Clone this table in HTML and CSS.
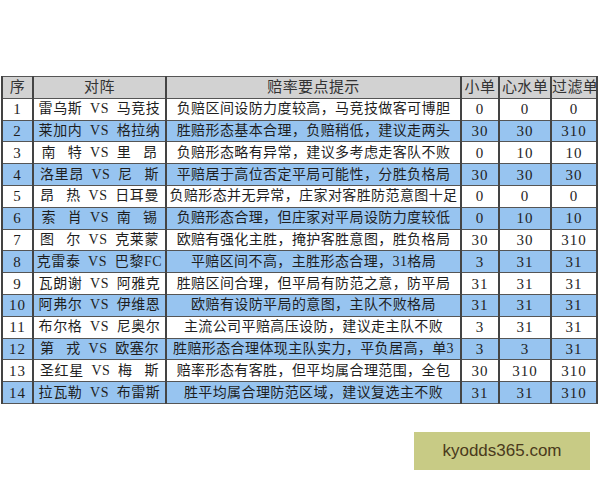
FILE: index.html
```html
<!DOCTYPE html>
<html lang="zh-CN">
<head>
<meta charset="utf-8">
<title>赔率要点提示</title>
<link rel="stylesheet" href="styles.css">
</head>
<body>
<div class="page">
  <table class="odds">
    <colgroup>
      <col class="c-no"><col class="c-match"><col class="c-tip"><col class="c-a"><col class="c-b"><col class="c-c">
    </colgroup>
    <thead>
      <tr><th>序</th><th>对阵</th><th>赔率要点提示</th><th>小单</th><th>心水单</th><th>过滤单</th></tr>
    </thead>
    <tbody>
      <tr><td class="num">1</td><td class="match">雷乌斯&ensp;VS&ensp;马竞技</td><td>负赔区间设防力度较高，马竞技做客可博胆</td><td class="num">0</td><td class="num">0</td><td class="num">0</td></tr>
      <tr class="blue"><td class="num">2</td><td class="match">莱加内&ensp;VS&ensp;格拉纳</td><td>胜赔形态基本合理，负赔稍低，建议走两头</td><td class="num">30</td><td class="num">30</td><td class="num">310</td></tr>
      <tr><td class="num">3</td><td class="match">南&ensp; 特&ensp;VS&ensp;里&ensp; 昂</td><td>负赔形态略有异常，建议多考虑走客队不败</td><td class="num">0</td><td class="num">10</td><td class="num">10</td></tr>
      <tr class="blue"><td class="num">4</td><td class="match">洛里昂&ensp;VS&ensp;尼&ensp; 斯</td><td>平赔居于高位否定平局可能性，分胜负格局</td><td class="num">30</td><td class="num">30</td><td class="num">30</td></tr>
      <tr><td class="num">5</td><td class="match">昂&ensp; 热&ensp;VS&ensp;日耳曼</td><td>负赔形态并无异常，庄家对客胜防范意图十足</td><td class="num">0</td><td class="num">0</td><td class="num">0</td></tr>
      <tr class="blue"><td class="num">6</td><td class="match">索&ensp; 肖&ensp;VS&ensp;南&ensp; 锡</td><td>负赔形态合理，但庄家对平局设防力度较低</td><td class="num">0</td><td class="num">10</td><td class="num">10</td></tr>
      <tr><td class="num">7</td><td class="match">图&ensp; 尔&ensp;VS&ensp;克莱蒙</td><td>欧赔有强化主胜，掩护客胜意图，胜负格局</td><td class="num">30</td><td class="num">30</td><td class="num">310</td></tr>
      <tr class="blue"><td class="num">8</td><td class="match">克雷泰&ensp;VS&ensp;巴黎FC</td><td>平赔区间不高，主胜形态合理，31格局</td><td class="num">3</td><td class="num">31</td><td class="num">31</td></tr>
      <tr><td class="num">9</td><td class="match">瓦朗谢&ensp;VS&ensp;阿雅克</td><td>胜赔区间合理，但平局有防范之意，防平局</td><td class="num">31</td><td class="num">31</td><td class="num">31</td></tr>
      <tr class="blue"><td class="num">10</td><td class="match">阿弗尔&ensp;VS&ensp;伊维恩</td><td>欧赔有设防平局的意图，主队不败格局</td><td class="num">31</td><td class="num">31</td><td class="num">31</td></tr>
      <tr><td class="num">11</td><td class="match">布尔格&ensp;VS&ensp;尼奥尔</td><td>主流公司平赔高压设防，建议走主队不败</td><td class="num">3</td><td class="num">31</td><td class="num">31</td></tr>
      <tr class="blue"><td class="num">12</td><td class="match">第&ensp; 戎&ensp;VS&ensp;欧塞尔</td><td>胜赔形态合理体现主队实力，平负居高，单3</td><td class="num">3</td><td class="num">3</td><td class="num">31</td></tr>
      <tr><td class="num">13</td><td class="match">圣红星&ensp;VS&ensp;梅&ensp; 斯</td><td>赔率形态有客胜，但平均属合理范围，全包</td><td class="num">30</td><td class="num">310</td><td class="num">310</td></tr>
      <tr class="blue"><td class="num">14</td><td class="match">拉瓦勒&ensp;VS&ensp;布雷斯</td><td>胜平均属合理防范区域，建议复选主不败</td><td class="num">31</td><td class="num">31</td><td class="num">310</td></tr>
    </tbody>
  </table>
  <div class="mark-row">
    <div class="mark">kyodds365.com</div>
  </div>
</div>
</body>
</html>
```
FILE: styles.css
```css
html, body {
  margin: 0;
  padding: 0;
  background: #ffffff;
}
.page {
  width: 600px;
  height: 480px;
  padding-top: 76px;
  box-sizing: border-box;
  overflow: hidden;
}
.odds {
  margin-left: 1px;
  width: 595px;
  table-layout: fixed;
  border-collapse: collapse;
  font-family: "Liberation Serif", "Noto Sans CJK SC", serif;
  font-size: 14px;
  color: #1e1e1e;
}
.c-no { width: 31px; }
.c-match { width: 133px; }
.c-tip { width: 295px; }
.c-a { width: 38px; }
.c-b { width: 52px; }
.c-c { width: 46px; }
.odds th, .odds td {
  height: 20.8px;
  padding: 0;
  text-align: center;
  white-space: nowrap;
  overflow: hidden;
  border-top: 1px solid #555555;
  border-bottom: 1px solid #555555;
  border-left: 2px solid #444444;
  border-right: 2px solid #444444;
  line-height: 20px;
  letter-spacing: 0.4px;
}
.odds th {
  background: #d2d2d2;
  font-weight: normal;
  color: #333333;
  font-size: 15px;
}
.odds tr.blue td {
  background: #97c4f0;
}
.odds td.num {
  font-size: 15px;
  letter-spacing: 1px;
}
.odds td.match {
  letter-spacing: 0.6px;
}
.mark-row {
  display: flex;
  justify-content: flex-end;
  padding-right: 10px;
  margin-top: 28px;
}
.mark {
  width: 176px;
  height: 38px;
  background: #c8cb85;
  color: #4a3a1c;
  font-family: "Liberation Sans", Arial, sans-serif;
  font-size: 17px;
  display: flex;
  align-items: center;
  justify-content: center;
}
```
